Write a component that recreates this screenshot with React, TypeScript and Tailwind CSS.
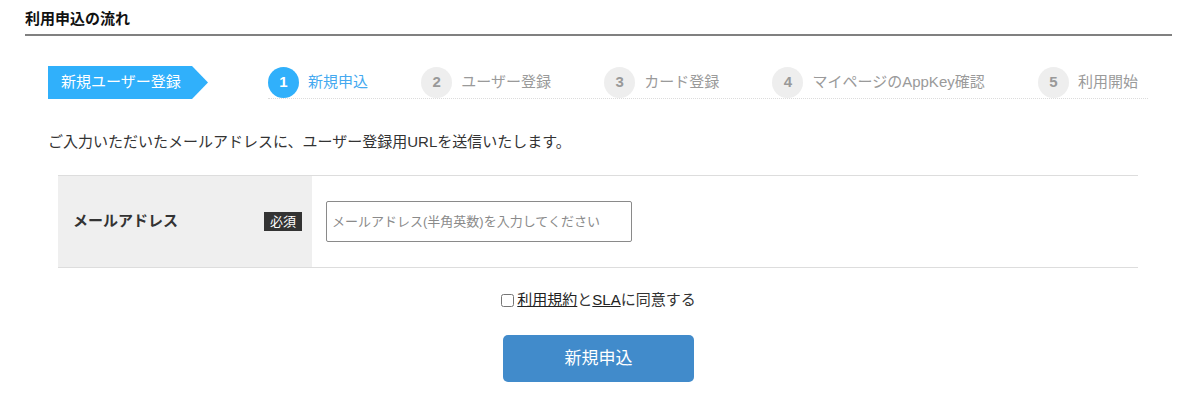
import React from 'react';

const STEPS = [
  { no: 1, label: '新規申込', active: true },
  { no: 2, label: 'ユーザー登録', active: false },
  { no: 3, label: 'カード登録', active: false },
  { no: 4, label: 'マイページのAppKey確認', active: false },
  { no: 5, label: '利用開始', active: false },
];

export default function App() {
  return (
    <div className="w-[1200px] h-[416px] bg-white pl-[25px] pr-[28px] text-[#333] font-['Liberation_Sans','Noto_Sans_CJK_JP',sans-serif]">
      {/* 見出し */}
      <div className="pt-[9px] pb-[5px] border-b-2 border-[#808080]">
        <h2 className="text-[15px] leading-[20px] font-bold text-[#111]">利用申込の流れ</h2>
      </div>

      {/* ステップ */}
      <div className="mt-[30px] ml-[23px] flex items-center">
        <div className="w-[160px] h-[33px] bg-[#30b0fb] text-white text-[15px] flex items-center pl-[13px] [clip-path:polygon(0_0,calc(100%-16px)_0,100%_50%,calc(100%-16px)_100%,0_100%)]">
          新規ユーザー登録
        </div>
        <div className="ml-[60px] w-[880px] h-[33px] pr-[10px] flex items-center justify-between border-b border-dotted border-[#dcdcdc]">
          {STEPS.map((s) => (
            <div key={s.no} className="flex items-center gap-[9px]">
              <span
                className={`w-[31px] h-[31px] rounded-full flex items-center justify-center text-[15px] font-bold ${s.active ? 'bg-[#30b0fb] text-white' : 'bg-[#eeeeee] text-[#999]'}`}
              >
                {s.no}
              </span>
              <span className={`text-[15px] ${s.active ? 'text-[#45a9f0]' : 'text-[#9a9a9a]'}`}>{s.label}</span>
            </div>
          ))}
        </div>
      </div>

      {/* 説明 */}
      <p className="mt-[33px] ml-[23px] text-[15px] leading-[20px]">
        ご入力いただいたメールアドレスに、ユーザー登録用URLを送信いたします。
      </p>

      {/* フォーム */}
      <div className="mt-[23px] ml-[33px] w-[1080px] flex border-y border-[#dddddd]">
        <div className="w-[254px] h-[91px] bg-[#efefef] flex items-center justify-between pl-[15px] pr-[10px]">
          <span className="text-[15px] font-bold">メールアドレス</span>
          <span className="bg-[#333] text-white text-[13px] leading-[19px] px-[6px]">必須</span>
        </div>
        <div className="flex-1 flex items-center pl-[14px]">
          <input
            type="text"
            placeholder="メールアドレス(半角英数)を入力してください"
            className="w-[306px] h-[41px] border border-[#8a8a8a] rounded-[2px] px-[5px] text-[13px] placeholder:text-[#8a8a8a] outline-none"
          />
        </div>
      </div>

      {/* 同意 */}
      <div className="mt-[22px] flex items-center justify-center text-[15px] leading-[20px]">
        <input type="checkbox" className="m-0 mr-[3px] w-[13px] h-[13px]" />
        <a className="underline text-[#222]">利用規約</a>
        <span>と</span>
        <a className="underline text-[#222]">SLA</a>
        <span>に同意する</span>
      </div>

      <div className="mt-[25px] flex justify-center">
        <button className="w-[191px] h-[47px] rounded-[5px] bg-[#418bcb] text-white text-[17px]">新規申込</button>
      </div>
    </div>
  );
}
